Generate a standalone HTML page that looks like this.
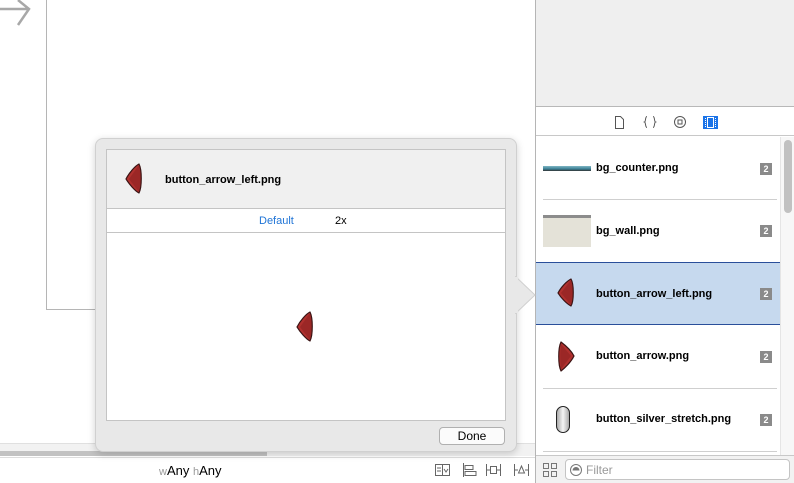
<!DOCTYPE html>
<html><head><meta charset="utf-8"><style>
*{margin:0;padding:0;box-sizing:border-box}
body{width:794px;height:483px;overflow:hidden;position:relative;background:#fff;font-family:"Liberation Sans",sans-serif;font-size:11px;color:#000}
.a{position:absolute}
.b{font-weight:bold}
.badge{position:absolute;left:760px;width:12px;height:12px;background:#8a8a8a;color:#fff;font-size:9px;font-weight:bold;text-align:center;line-height:12px}
.sep{position:absolute;left:543px;width:234px;height:1px;background:#cfcfcf}
</style></head><body>
<!-- canvas -->
<div class="a" style="left:46px;top:0;width:1px;height:310px;background:#b5b5b5"></div>
<div class="a" style="left:46px;top:309px;width:50px;height:1px;background:#b5b5b5"></div>
<svg class="a" style="left:0;top:0" width="50" height="30"><path d="M0 9H29M18 0L29 9L18 25" stroke="#a8a8a8" stroke-width="2.5" fill="none"/></svg>
<div class="a" style="left:0;top:443px;width:535px;height:13px;background:#f2f2f2;border-top:1px solid #e0e0e0"></div>
<div class="a" style="left:0;top:451px;width:267px;height:5px;background:#c2c2c2"></div>
<div class="a" style="left:0;top:457px;width:535px;height:26px;background:#fff;border-top:1px solid #ddd"></div>
<div class="a" style="left:159px;top:463px;font-size:13px"><span style="color:#999;font-size:11px">w</span>Any <span style="color:#999;font-size:11px">h</span>Any</div>
<svg class="a" style="left:434px;top:462px" width="100" height="16" fill="none" stroke="#666" stroke-width="1">
<rect x="1.5" y="2.5" width="14" height="11"/><path d="M8.5 2v12M3 6h4M3 9h4M10 7l2 3 2-3"/>
<path d="M29.5 1v14M31 3.5h8v4h-8zM31 9.5h11v4h-11z"/>
<path d="M52.5 2v12M66.5 2v12M53 8h3M63 8h3M56.5 4.5h6v7h-6z"/>
<path d="M80.5 2v12M94.5 2v12M81 8h3M91 8h3M87.5 4l-3 7h6z"/>
</svg>
<!-- right panel -->
<div class="a" style="left:535px;top:0;width:1px;height:483px;background:#b5b5b5"></div>
<div class="a" style="left:536px;top:0;width:258px;height:107px;background:#efefef;border-bottom:1px solid #b8b8b8"></div>
<div class="a" style="left:536px;top:108px;width:258px;height:28px;background:#fff;border-bottom:1px solid #c8c8c8"></div>
<svg class="a" style="left:610px;top:114px" width="110" height="16" fill="none" stroke="#555" stroke-width="1">
<path d="M5.5 2.5h5l3 3v9h-8z"/>
<path d="M37 2.5c-2 0-1 5-2.5 5.5c1.5 .5 .5 5.5 2.5 5.5M43 2.5c2 0 1 5 2.5 5.5c-1.5 .5-.5 5.5-2.5 5.5"/>
<circle cx="70" cy="8" r="5.5"/><rect x="68" y="6" width="4" height="4"/>
<rect x="93" y="2" width="15" height="13" fill="#1a73e8" stroke="none"/><path d="M95.5 4v9M105.5 4v9" stroke="#fff" stroke-dasharray="1 1"/><rect x="97.5" y="3.5" width="6" height="10" stroke="#fff"/>
</svg>
<div class="a" style="left:780px;top:137px;width:14px;height:318px;background:#f7f7f7;border-left:1px solid #e5e5e5"></div>
<div class="a" style="left:784px;top:140px;width:8px;height:73px;background:#c1c1c1;border-radius:4px"></div>
<!-- rows -->
<div class="a" style="left:543px;top:166px;width:48px;height:5px;background:linear-gradient(#7fb6c4,#3b7f94 60%,#333)"></div>
<div class="a b" style="left:596px;top:162px">bg_counter.png</div><div class="badge" style="top:163px">2</div>
<div class="sep" style="top:199px"></div>
<div class="a" style="left:543px;top:215px;width:48px;height:32px;background:#e4e2d8;border-top:3px solid #8c8c8c"></div>
<div class="a b" style="left:596px;top:225px">bg_wall.png</div><div class="badge" style="top:225px">2</div>
<div class="a" style="left:536px;top:262px;width:244px;height:63px;background:#c6d9ee;border-top:1px solid #2a4f9a;border-bottom:1px solid #2a4f9a"></div>
<svg class="a" style="left:556px;top:278px" width="20" height="30"><path d="M15 1C18 6 18 23 15 28C11 26 5 20 2 15C5 9 11 3 15 1Z" fill="#b0302e" stroke="#3a1414" stroke-width="1.2" stroke-linejoin="round"/><path d="M15 2C17 8 17 21 15 27L5 15Z" fill="#8e2222" opacity=".6"/></svg>
<div class="a b" style="left:596px;top:288px">button_arrow_left.png</div><div class="badge" style="top:288px">2</div>
<svg class="a" style="left:556px;top:341px" width="20" height="32"><path d="M5 1C2 7 2 24 5 30C9 27 15 21 18 15C15 9 9 4 5 1Z" fill="#b0302e" stroke="#3a1414" stroke-width="1.2" stroke-linejoin="round"/><path d="M5 3C4 9 4 22 5 28L15 15Z" fill="#8e2222" opacity=".6"/></svg>
<div class="a b" style="left:596px;top:350px">button_arrow.png</div><div class="badge" style="top:351px">2</div>
<div class="sep" style="top:388px"></div>
<div class="a" style="left:556px;top:406px;width:14px;height:27px;border:1.5px solid #222;border-radius:7px;background:linear-gradient(90deg,#aaa,#f5f5f5 50%,#aaa)"></div>
<div class="a b" style="left:596px;top:413px">button_silver_stretch.png</div><div class="badge" style="top:414px">2</div>
<div class="sep" style="top:451px"></div>
<div class="a" style="left:536px;top:455px;width:258px;height:28px;background:#f2f2f2;border-top:1px solid #c8c8c8"></div>
<svg class="a" style="left:542px;top:462px" width="16" height="16" fill="none" stroke="#777"><rect x="1.5" y="1.5" width="5" height="5"/><rect x="9.5" y="1.5" width="5" height="5"/><rect x="1.5" y="9.5" width="5" height="5"/><rect x="9.5" y="9.5" width="5" height="5"/></svg>
<div class="a" style="left:565px;top:459px;width:225px;height:21px;background:#fff;border:1px solid #c4c4c4;border-radius:4px"></div>
<svg class="a" style="left:569px;top:463px" width="14" height="14"><circle cx="7" cy="7" r="5.5" fill="none" stroke="#777"/><path d="M3.5 7.5a3.5 3.5 0 0 1 7 0z" fill="#777"/></svg>
<div class="a" style="left:586px;top:463px;color:#999;font-size:12px">Filter</div>
<!-- popover -->
<div class="a" style="left:95px;top:138px;width:422px;height:314px;background:#e8e8e8;border:1px solid #d0d0d0;border-radius:8px;box-shadow:0 2px 8px rgba(0,0,0,.18)"></div>
<svg class="a" style="left:515px;top:276px" width="22" height="38"><path d="M0 0L20 19L0 38" fill="#e8e8e8" stroke="#d0d0d0"/><rect x="0" y="1" width="3" height="36" fill="#e8e8e8"/></svg>
<div class="a" style="left:106px;top:149px;width:400px;height:272px;background:#fff;border:1px solid #c4c4c4"></div>
<div class="a" style="left:107px;top:150px;width:398px;height:59px;background:#f0f0f0;border-bottom:1px solid #c4c4c4"></div>
<svg class="a" style="left:124px;top:163px" width="20" height="32"><path d="M15 1C18 7 18 24 15 30C11 28 5 21 2 16C5 10 11 3 15 1Z" fill="#b0302e" stroke="#3a1414" stroke-width="1.2" stroke-linejoin="round"/><path d="M15 2C17 8 17 23 15 29L5 16Z" fill="#8e2222" opacity=".6"/></svg>
<div class="a b" style="left:165px;top:174px">button_arrow_left.png</div>
<div class="a" style="left:107px;top:232px;width:398px;height:1px;background:#c4c4c4"></div>
<div class="a" style="left:259px;top:215px;color:#1f74d6">Default</div>
<div class="a" style="left:335px;top:215px">2x</div>
<svg class="a" style="left:295px;top:311px" width="20" height="32"><path d="M15 1C18 7 18 24 15 30C11 28 5 21 2 16C5 10 11 3 15 1Z" fill="#b0302e" stroke="#3a1414" stroke-width="1.2" stroke-linejoin="round"/><path d="M15 2C17 8 17 23 15 29L5 16Z" fill="#8e2222" opacity=".6"/></svg>
<div class="a" style="left:439px;top:427px;width:66px;height:18px;background:#fbfbfb;border:1px solid #b0b0b0;border-radius:4px;text-align:center;font-size:12px;line-height:16px">Done</div>
</body></html>
